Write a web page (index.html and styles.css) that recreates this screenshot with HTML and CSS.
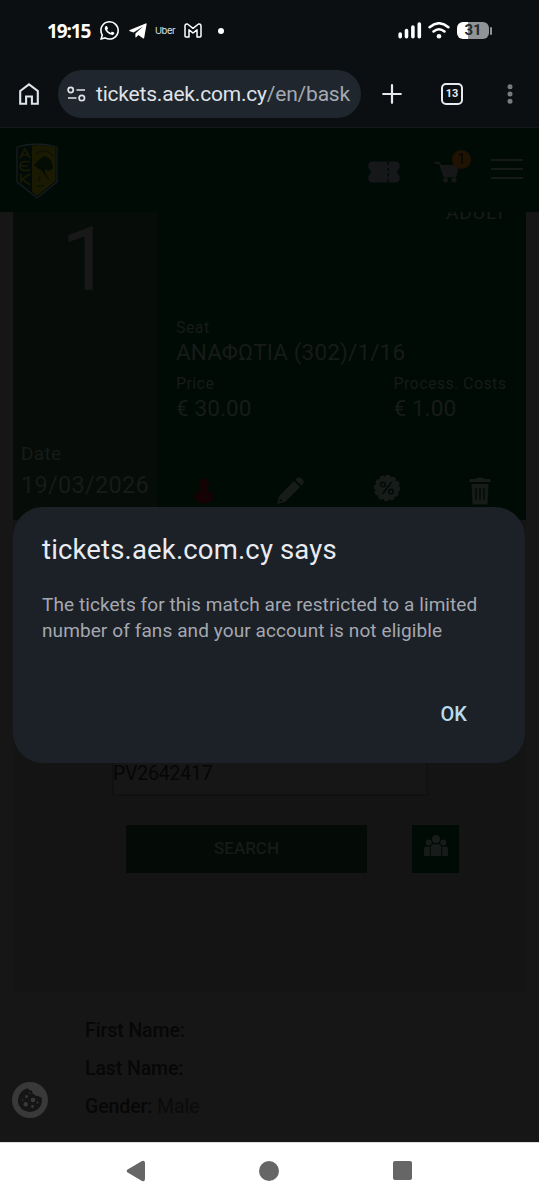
FILE: index.html
```html
<!DOCTYPE html>
<html lang="en">
<head>
<meta charset="utf-8">
<title>Basket</title>
<link rel="stylesheet" href="styles.css">
</head>
<body>
<div class="phone">
  <div class="status">
    <span class="clock">19:15</span>
    <svg class="whatsapp" width="19" height="19" viewBox="0 0 24 24"><path fill="#fff" d="M17.5 14.4c-.3-.15-1.76-.87-2.03-.97-.27-.1-.47-.15-.67.15-.2.3-.77.97-.94 1.16-.17.2-.35.22-.64.08-.3-.15-1.26-.46-2.4-1.48-.88-.79-1.48-1.76-1.65-2.06-.17-.3 0-.46.13-.6.13-.14.3-.35.45-.53.15-.17.2-.3.3-.5.1-.2.05-.37-.03-.52-.07-.15-.67-1.61-.91-2.2-.24-.6-.49-.52-.67-.52h-.57c-.2 0-.52.07-.8.37-.27.3-1.04 1.02-1.04 2.48s1.07 2.88 1.21 3.07c.15.2 2.1 3.2 5.08 4.49 2.5 1 3 .8 3.55.75.55-.05 1.76-.72 2-1.41.25-.7.25-1.3.18-1.42-.08-.12-.27-.2-.57-.35M12.05 21.8a9.9 9.9 0 0 1-5.03-1.38l-.36-.21-3.74.98 1-3.65-.24-.37a9.86 9.86 0 0 1-1.5-5.26C2.18 6.44 6.62 2 12.06 2a9.89 9.89 0 0 1 9.88 9.9c0 5.44-4.43 9.88-9.88 9.88M20.5 3.5A11.8 11.8 0 0 0 12.05 0C5.5 0 .16 5.33.16 11.9c0 2.1.55 4.14 1.6 5.94L.06 24l6.3-1.65a11.9 11.9 0 0 0 5.68 1.45c6.55 0 11.9-5.34 11.9-11.9 0-3.17-1.24-6.16-3.48-8.4"/></svg>
    <svg class="telegram" width="18" height="16" viewBox="0 0 18 16"><path fill="#fff" d="M.8 7 16.6.4q1.2-.4 1 .9L15.200 14.700q-.3 1.200-1.400.5L9.400 12l-2.200 2.200q-.8.600-.8-.5V10.500L14 3.600 4.600 9.500.9 8.300Q-.4 7.700.8 7Z"/></svg>
    <span class="uber">Uber</span>
    <svg class="gmail" width="18" height="15" viewBox="0 0 18 15"><path fill="none" stroke="#fff" stroke-width="1.500" stroke-linejoin="round" d="M1 13V3Q1 .6 3.500 1L9 5.300 14.500 1Q17 .6 17 3V13Q17 13.900 16 13.900H13V6.800L9 10 5 6.800V13.900H2Q1 13.900 1 13Z"/></svg>
    <i class="more-dot"></i>
    <svg class="signal" width="24" height="18" viewBox="0 0 24 18"><g stroke="#fff" stroke-width="3.600" stroke-linecap="round"><path d="M2.200 12V14.800M8.500 8.500V14.800M14.900 5V14.800M21.300 2V14.800"/></g></svg>
    <svg class="wifi" width="22" height="17" viewBox="0 0 22 17"><g fill="none" stroke="#fff" stroke-width="2.500" stroke-linecap="round"><path d="M1.600 5.200Q11-2.700 20.400 5.200M5.500 9.400Q11 5 16.500 9.400"/></g><circle cx="11" cy="14.200" r="2.300" fill="#fff"/></svg>
    <span class="battery"><span>31</span></span><i class="battery-tip"></i>
  </div>

  <div class="toolbar">
    <svg class="home" width="20" height="22" viewBox="0 0 20 22"><path fill="none" stroke="#dfe3ea" stroke-width="2.100" d="M1.200 8 10 1.400 18.800 8V20.700H12.900V13.500H7.100V20.700H1.200Z"/></svg>
    <div class="address">
      <svg width="19" height="16" viewBox="0 0 19 16"><g fill="none" stroke="#dfe3ea" stroke-width="1.700"><circle cx="3.700" cy="4" r="2.600"/><path d="M9.500 4H18M1 12H9.500"/><circle cx="14.800" cy="12" r="2.700"/></g></svg>
      <span class="url">tickets.aek.com.cy<span class="path">/en/bask</span></span>
    </div>
    <svg class="plus" width="20" height="20" viewBox="0 0 20 20"><path stroke="#e6eaf0" stroke-width="2.200" stroke-linecap="round" d="M10 1.200V18.800M1.200 10H18.800"/></svg>
    <span class="tabs">13</span>
    <svg class="kebab" width="6" height="20" viewBox="0 0 6 20"><g fill="#777b80"><circle cx="3" cy="2.700" r="2.500"/><circle cx="3" cy="10" r="2.500"/><circle cx="3" cy="17.300" r="2.500"/></g></svg>
  </div>

  <main class="site">
    <header class="masthead">
      <svg class="crest" width="42" height="56" viewBox="0 0 42 56"><path fill="#020b07" stroke="#171d21" stroke-width="1.300" d="M1 4Q21-2 41 4V39L21 55 1 39Z"/><path fill="#1a1902" d="M16 2.500Q29 .8 39.500 4.500V38L21 53 16 49Z"/><g fill="none" stroke="#1a1902" stroke-width="1.700"><path d="M4 15 9 6 14 15M6 12H12M14 19Q4 17 4 23T14 27M5 23H12M5 31V40M14 31 6 36 14 42"/></g><path fill="#040d05" d="M18 22 24 16 29 13 35 17 37 25 33 28 29 26 30 34 26 28 23 26Z"/><path fill="none" stroke="#0d1205" stroke-width="1.300" d="M20 11Q30 4 37 13M24 33 23 38M30 32 33 37M21 43H28"/></svg>
      <svg class="coupon" width="32" height="22" viewBox="0 0 32 22"><path fill="#151719" fill-rule="evenodd" d="M3 .5H29L31.500 3V7Q27 11 31.500 15V19L29 21.500H3L.5 19V15Q5 11 .5 7V3ZM19.500 1V4H21V1ZM19.500 7V10H21V7ZM19.500 12.500V15.500H21V12.500ZM19.500 18.200V21.200H21V18.200Z"/></svg>
      <div class="cart">
        <svg width="26" height="22" viewBox="0 0 26 22"><path fill="#151719" d="M0 .7H5.500L7.500 4H25L22.500 15H9L5 3H1ZM10 15H22V16.500H10Z"/><circle cx="11.500" cy="19" r="2.600" fill="#151719"/><circle cx="20" cy="19" r="2.600" fill="#151719"/></svg>
        <span class="count">1</span>
      </div>
      <div class="menu"><i></i><i></i><i></i></div>
    </header>

    <section class="ticket">
      <div class="event">
        <span class="number">1</span>
        <span class="date-label">Date</span>
        <span class="date">19/03/2026</span>
      </div>
      <div class="details">
        <span class="category">ADULT</span>
        <span class="label">Seat</span>
        <span class="value seat">ΑΝΑΦΩΤΙΑ (302)/1/16</span>
        <div class="prices">
          <div><span class="label">Price</span><span class="value">€ 30.00</span></div>
          <div class="costs"><span class="label">Process. Costs</span><span class="value">€ 1.00</span></div>
        </div>
        <div class="actions">
          <svg width="22" height="28" viewBox="0 0 22 28"><g fill="#140205"><circle cx="11" cy="6.500" r="5"/><path d="M8 10H14L15 14H7Z"/><ellipse cx="11" cy="20" rx="10" ry="6.500"/></g></svg>
          <svg width="28" height="28" viewBox="0 0 28 28"><path fill="#171b19" d="M1 27 3 19 18 4 24 10 9 25ZM19.300 2.700 21 1Q23-.5 25 1L27 3Q28.500 5 27 7L25.300 8.700Z"/><path fill="#000b05" d="M3.800 21.500 6.500 24 3.800 24.600Z"/></svg>
          <svg width="28" height="28" viewBox="0 0 28 28"><circle cx="14" cy="14" r="11.800" fill="#171b19"/><circle cx="14" cy="14" r="11.500" fill="none" stroke="#171b19" stroke-width="3.500" stroke-linecap="round" stroke-dasharray="1.500 4.520"/><g fill="none" stroke="#000b05" stroke-width="1.500"><path d="M18.500 8 9.500 20"/><circle cx="10" cy="10.500" r="2.300"/><circle cx="18" cy="17.500" r="2.300"/></g></svg>
          <svg width="22" height="28" viewBox="0 0 22 28"><path fill="#171b19" d="M1 2H7L8 .5H14L15 2H21L22 5H0ZM2.500 7H19.500L18.500 27.500H3.500Z"/><path stroke="#000b05" stroke-width="1.400" d="M7 11V23M11 11V23M15 11V23"/></svg>
        </div>
      </div>
    </section>

    <section class="lookup">
      <div class="field">PV2642417</div>
      <div class="buttons">
        <div class="search">SEARCH</div>
        <div class="friends"><svg width="24" height="22" viewBox="0 0 24 22"><g fill="#171b19"><circle cx="12" cy="4" r="4"/><circle cx="4.700" cy="7.500" r="3"/><circle cx="19.300" cy="7.500" r="3"/><path d="M6.800 21V12Q7 9.200 9 9.200H15Q17 9.200 17.200 12V21ZM0 21V14Q0 11.600 2.500 11.600H5.800V21ZM18.200 21V11.600H21.500Q24 11.600 24 14V21Z"/></g></svg></div>
      </div>
    </section>

    <section class="person">
      <div>First Name:</div>
      <div>Last Name:</div>
      <div>Gender: <span>Male</span></div>
    </section>

    <div class="cookie"><svg width="24" height="24" viewBox="0 0 24 24"><path fill="#151515" d="M10 .2Q11 3 14 2.500 14 6 17 7 18 8.500 20 7.800 20.500 9 23.500 9.500 25 16 20 21 14 26 6 22.500-1 18 .2 10.500 2 2 10 .2Z"/><g fill="#393939"><circle cx="8.500" cy="8.500" r="1.500"/><circle cx="15" cy="12" r="2.300"/><circle cx="7.700" cy="16.200" r="2.200"/><circle cx="14.500" cy="18.500" r="1.400"/><circle cx="4.500" cy="12" r=".8"/><circle cx="19.500" cy="14.500" r="1"/><circle cx="12" cy="5.200" r=".7"/></g></svg></div>

    <div class="dialog" role="alertdialog">
      <div class="title">tickets.aek.com.cy says</div>
      <div class="message"><span class="line one">The tickets for this match are restricted to a limited</span><span class="line two">number of fans and your account is not eligible</span></div>
      <div class="ok">OK</div>
    </div>
  </main>

  <nav class="navbar">
    <svg width="20" height="22" viewBox="0 0 20 22"><path fill="#666" d="M1.200 9.700 16 1.100Q18.800 0 19 3V19Q18.800 22 16 20.900L1.200 12.300Q0 11 1.200 9.700Z"/></svg>
    <i class="circle"></i>
    <i class="square"></i>
  </nav>
</div>
</body>
</html>
```
FILE: styles.css
```css
* { box-sizing: border-box; }
body { margin: 0; background: #0b0f12; font-family: Roboto, sans-serif; }
svg { display: block; flex: none; }
.phone { width: 539px; height: 1200px; overflow: hidden; display: flex; flex-direction: column; white-space: nowrap; }

.status { height: 60px; display: flex; align-items: center; padding: 1px 0 0 47px; color: #fff; flex: none; }
.clock { width: 53px; font: 700 19px/24px "Open Sans", sans-serif; letter-spacing: -1.1px; }
.telegram { margin-left: 10px; }
.uber { width: 21px; margin-left: 8px; font: 9.500px/12px Inter, sans-serif; letter-spacing: -0.5px; color: #dfe2e5; }
.gmail { margin-left: 8px; }
.more-dot { width: 6px; height: 6px; margin-left: 16px; border-radius: 50%; background: #fff; }
.signal { margin-left: 174px; }
.wifi { margin-left: 6px; }
.battery { width: 32px; height: 17px; margin-left: 7px; border-radius: 6px; background: linear-gradient(90deg, #fff 33%, #919394 33%); color: #25282b; text-align: center; font: 700 15px/17px Roboto, sans-serif; }
.battery-tip { width: 2px; height: 8px; margin-left: 1px; border-radius: 1px; background: #919394; }

.toolbar { height: 68px; flex: none; display: flex; align-items: center; padding-left: 19px; border-bottom: 1px solid #151a19; }
.address { width: 303px; height: 48px; margin-left: 19px; padding-left: 9px; border-radius: 24px; background: #20262d; display: flex; align-items: center; }
.url { margin-left: 10px; font-size: 21px; line-height: 28px; color: #dfe3ea; letter-spacing: -0.2px; }
.url .path { color: #a4a9b2; }
.plus { margin-left: 21px; }
.tabs { width: 22px; height: 22px; margin-left: 39px; border: 2px solid #e6eaf0; border-radius: 5px; color: #e6eaf0; text-align: center; font: 700 11px/18px Roboto, sans-serif; }
.kebab { margin-left: 44px; }

.site { position: relative; height: 1014px; flex: none; background: #161616; }
.masthead { position: relative; z-index: 1; height: 84px; padding: 15px 16px 0; background: #000b05; display: flex; align-items: flex-start; }
.coupon { margin: 18px 0 0 310px; }
.cart { position: relative; margin: 18px 0 0 34px; }
.count { position: absolute; left: 18px; top: -11px; width: 19px; height: 19px; border-radius: 50%; background: #211303; color: #070300; text-align: center; font: 14px/19px Roboto, sans-serif; }
.menu { width: 33px; margin: 16px 0 0 31px; display: grid; gap: 7px; }
.menu i { height: 2px; background: #151918; }

.ticket { height: 308px; margin: 0 13px; display: flex; background: #000b05; }
.event { width: 145px; background: #060c08; color: #171b19; display: flex; flex-direction: column; padding: 2px 0 0 8px; }
.number { margin-left: 40px; font-size: 89px; line-height: 92px; height: 227px; color: #181818; }
.date-label { font-size: 19px; line-height: 26px; letter-spacing: 0.3px; }
.date { margin-top: 4px; font-size: 23.500px; line-height: 28px; letter-spacing: 0.3px; }
.details { flex: 1; color: #171b19; padding-left: 18px; }
.category { display: block; width: 60px; height: 119px; margin: -10px 0 0 270px; font-size: 19px; line-height: 22px; letter-spacing: 0.9px; }
.label { display: block; font-size: 16px; line-height: 20px; letter-spacing: 0.4px; }
.value { display: block; font-size: 22.500px; line-height: 28px; letter-spacing: 0.1px; }
.seat { letter-spacing: 0.15px; }
.details > .label { margin-top: -3px; }
.prices { display: flex; margin-top: 8px; }
.costs { margin-left: 142px; }
.actions { display: flex; padding-top: 55px; margin-left: 17px; align-items: center; }
.actions svg:nth-child(2) { margin-left: 61px; }
.actions svg:nth-child(3) { margin: -6px 0 0 69px; }
.actions svg:nth-child(4) { margin-left: 68px; }

.lookup { height: 472px; margin: 0 13px; padding: 228px 0 0 99px; background: #141414; }
.field { width: 316px; height: 48px; border: 2px solid #111; background: #161616; font-size: 19.500px; line-height: 47px; color: #060606; letter-spacing: -0.2px; text-indent: -1px; }
.buttons { display: flex; margin: 29px 0 0 14px; }
.search { width: 241px; height: 48px; background: #040a06; color: #171a18; text-align: center; font: 500 17px/47px Roboto, sans-serif; }
.friends { width: 47px; height: 48px; margin-left: 45px; padding: 10px 0 0 12px; background: #000b05; }
.person { margin: 0 13px; padding: 20px 0 0 72px; font: 500 19.500px/38px Roboto, sans-serif; letter-spacing: -0.1px; color: #070707; }
.person span { font-weight: 400; margin-left: 0; color: #0b0b0b; }
.cookie { position: absolute; left: 12px; top: 954px; width: 36px; height: 36px; border-radius: 50%; background: #393939; display: grid; place-items: center; }

.dialog { position: absolute; z-index: 2; left: 13px; top: 379px; width: 512px; height: 256px; padding: 25px 29px; border-radius: 30px; background: #1c2027; display: flex; flex-direction: column; }
.title { font-size: 27.500px; line-height: 36px; color: #e8ebf1; letter-spacing: 0.15px; }
.message { margin-top: 24px; font-size: 19px; line-height: 26px; color: #a5a8b0; }
.line { display: block; }
.one { letter-spacing: 0.08px; }
.two { letter-spacing: 0.1px; }
.ok { align-self: flex-end; margin: 56px 29px 0 0; font: 500 20px/28px Roboto, sans-serif; color: #b5dced; }

.navbar { height: 58px; flex: none; background: #fff; border-top: 1px solid #ddd; padding: 0 0 2px 126px; display: flex; align-items: center; }
.circle { width: 20px; height: 20px; margin-left: 113px; border-radius: 50%; background: #666; }
.square { width: 19px; height: 19px; margin-left: 114px; border-radius: 2px; background: #666; }
```
